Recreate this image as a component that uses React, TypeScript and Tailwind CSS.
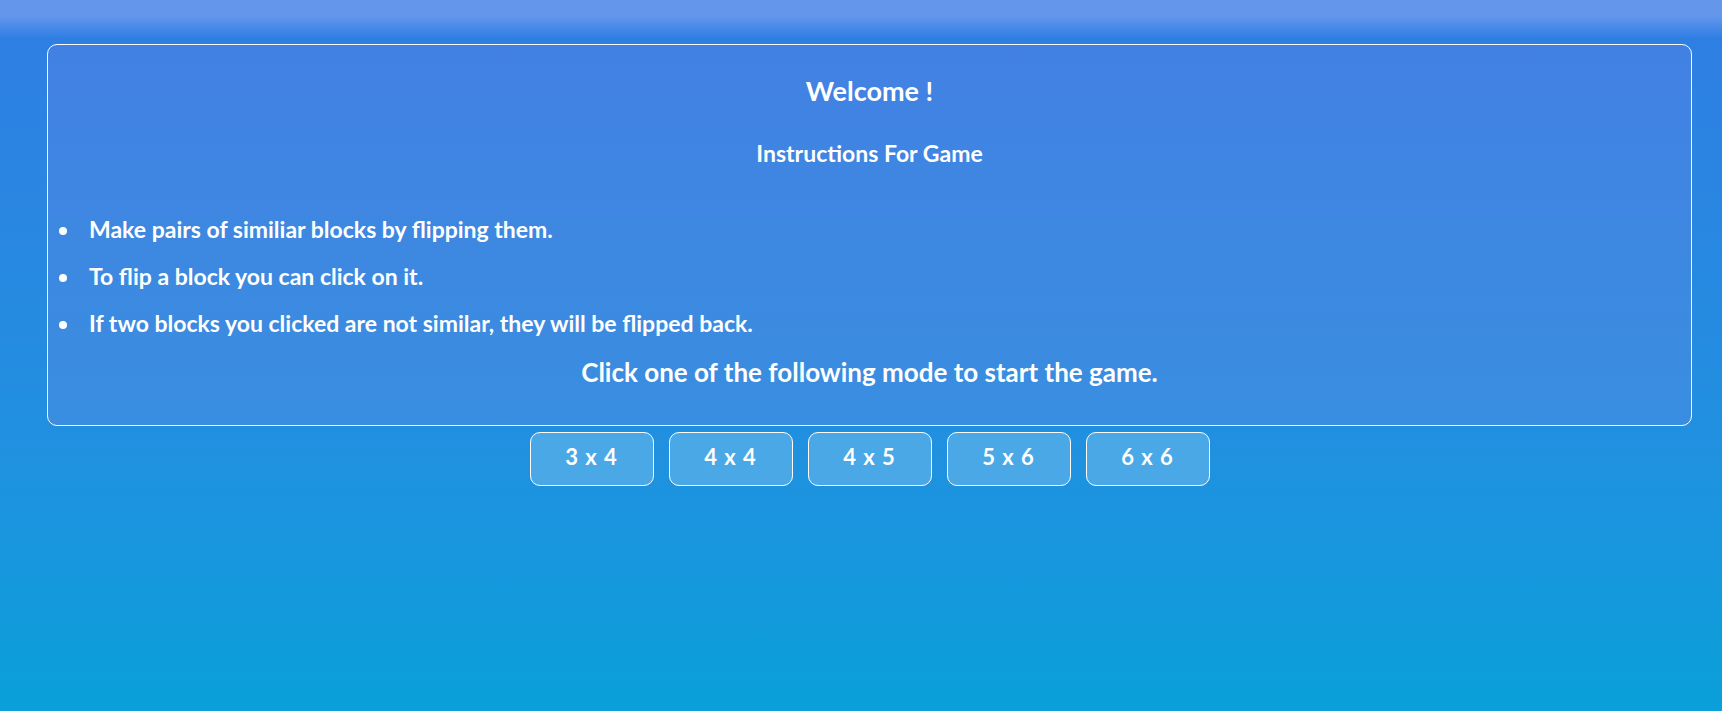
import React from "react";

const modes = ["3 x 4", "4 x 4", "4 x 5", "5 x 6", "6 x 6"];

const rules = [
  "Make pairs of similiar blocks by flipping them.",
  "To flip a block you can click on it.",
  "If two blocks you clicked are not similar, they will be flipped back.",
];

export default function App() {
  return (
    <div
      className="min-h-[711px] w-full pt-[44px] text-white font-bold bg-[linear-gradient(to_bottom,#6496ec_0px,#6496ec_16px,#2f7fe3_38px,#2190e0_440px,#0aa0da_711px)]"
      style={{ fontFamily: "Lato, 'Noto Sans', sans-serif" }}
    >
      <div className="ml-[47px] mr-[30px] h-[382px] rounded-[10px] border border-white bg-[linear-gradient(to_bottom,#4281e3,#398ee0)]">
        <h1 className="mt-[26px] text-center text-[27px] leading-[40px]">Welcome !</h1>
        <h2 className="mt-[28px] text-center text-[23px] leading-[28px]">Instructions For Game</h2>
        <ul className="mt-[47px] list-disc pl-[33px] text-[23px] leading-[30px]">
          {rules.map((r) => (
            <li key={r} className="mb-[17px] pl-[8px]">
              {r}
            </li>
          ))}
        </ul>
        <p className="text-center text-[26px] leading-[34px]">
          Click one of the following mode to start the game.
        </p>
      </div>
      <div className="ml-[47px] mr-[30px] mt-[6px] flex justify-center gap-[15px]">
        {modes.map((m) => (
          <button
            key={m}
            className="h-[54px] w-[124px] rounded-[10px] border border-white bg-[#4aa8e6] pb-[5px] text-[22px] tracking-[1px] text-white font-bold"
          >
            {m}
          </button>
        ))}
      </div>
    </div>
  );
}
